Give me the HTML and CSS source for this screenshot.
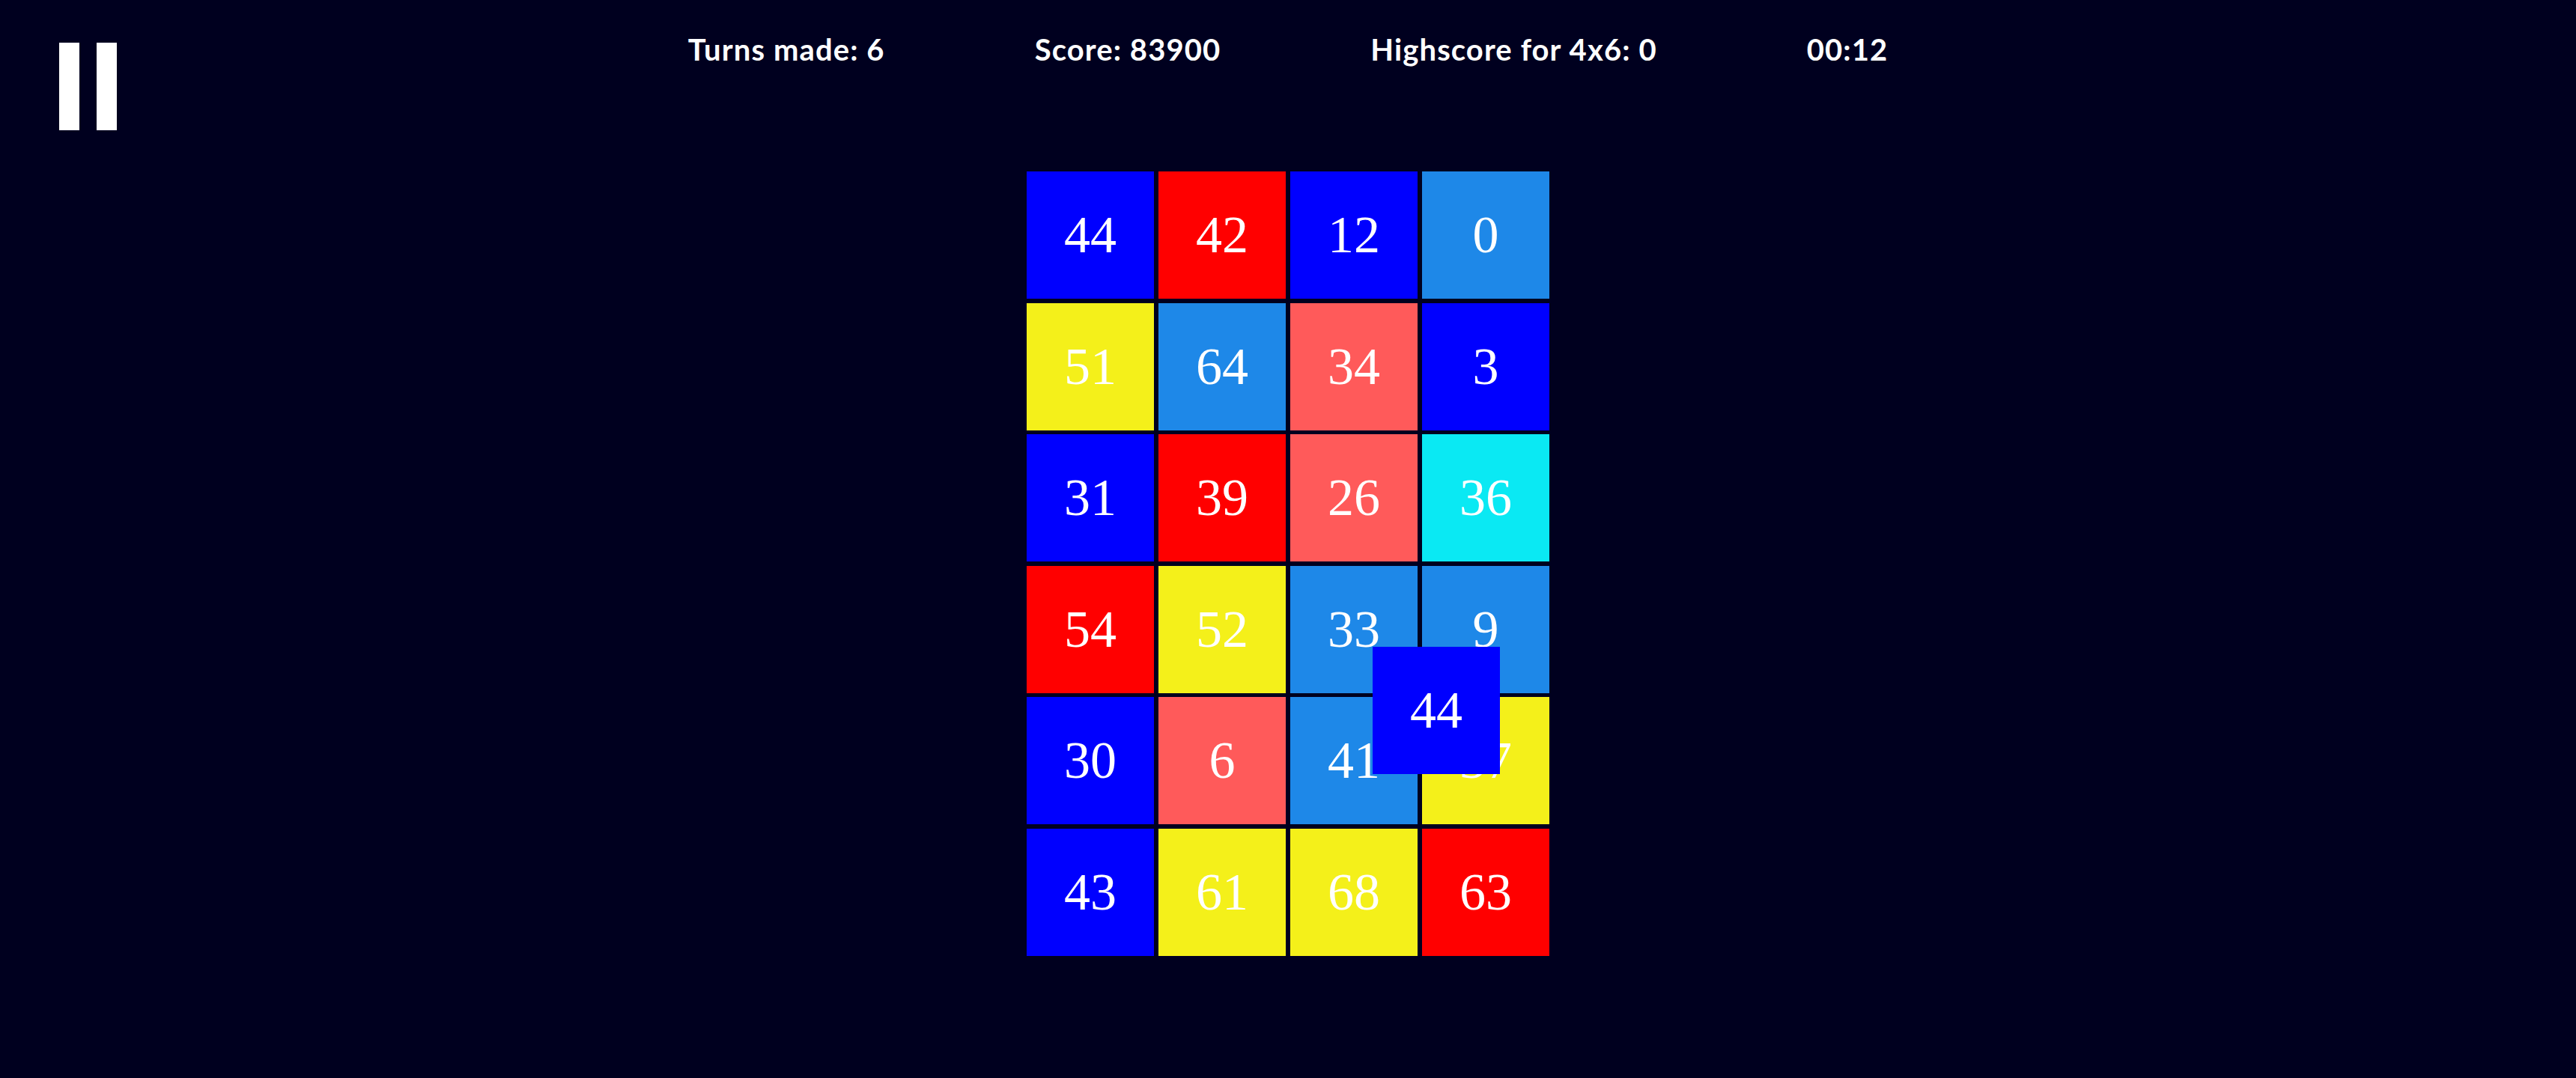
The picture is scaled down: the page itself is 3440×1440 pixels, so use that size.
FILE: index.html
```html
<!DOCTYPE html>
<html lang="en">
<head>
<meta charset="utf-8">
<title>Puzzle</title>
<link rel="stylesheet" href="styles.css">
</head>
<body>
<div class="page">
  <header class="topbar">
    <div class="left">
      <button class="pause" aria-label="Pause">
        <span class="bar"></span><span class="bar"></span>
      </button>
    </div>
    <div class="stats">
      <span class="stat">Turns made: 6</span>
      <span class="stat">Score: 83900</span>
      <span class="stat">Highscore for 4x6: 0</span>
      <span class="stat">00:12</span>
    </div>
    <div class="right"></div>
  </header>
  <main class="board-wrap">
    <div class="board">
      <div class="tile c-blue">44</div>
      <div class="tile c-red">42</div>
      <div class="tile c-blue">12</div>
      <div class="tile c-sky">0</div>

      <div class="tile c-yellow">51</div>
      <div class="tile c-sky">64</div>
      <div class="tile c-salmon">34</div>
      <div class="tile c-blue">3</div>

      <div class="tile c-blue">31</div>
      <div class="tile c-red">39</div>
      <div class="tile c-salmon">26</div>
      <div class="tile c-cyan">36</div>

      <div class="tile c-red">54</div>
      <div class="tile c-yellow">52</div>
      <div class="tile c-sky">33</div>
      <div class="tile c-sky">9</div>

      <div class="tile c-blue">30</div>
      <div class="tile c-salmon">6</div>
      <div class="tile c-sky">41</div>
      <div class="tile c-yellow">37</div>

      <div class="tile c-blue">43</div>
      <div class="tile c-yellow">61</div>
      <div class="tile c-yellow">68</div>
      <div class="tile c-red">63</div>

      <div class="tile c-blue dragging">44</div>
    </div>
  </main>
</div>
</body>
</html>
```
FILE: styles.css
```css
html, body {
  margin: 0;
  padding: 0;
  background: #00001f;
}

.page {
  width: 3440px;
  height: 1440px;
  display: flex;
  flex-direction: column;
  overflow: hidden;
}

.topbar {
  display: grid;
  grid-template-columns: 1fr auto 1fr;
  align-items: start;
  height: 174px;
}

.left {
  padding-left: 79px;
  padding-top: 57px;
}

.pause {
  display: flex;
  gap: 23px;
  padding: 0;
  margin: 0;
  border: 0;
  background: transparent;
  cursor: pointer;
}

.pause .bar {
  display: block;
  width: 27px;
  height: 117px;
  background: #ffffff;
}

.stats {
  display: flex;
  gap: 200px;
  padding-top: 42px;
  font-family: Lato, "Liberation Sans", sans-serif;
  font-weight: 700;
  font-size: 40px;
  letter-spacing: 1.1px;
  line-height: 48px;
  color: #ffffff;
  white-space: nowrap;
}

.board-wrap {
  display: flex;
  justify-content: center;
  padding-top: 55px;
}

.board {
  position: relative;
  display: grid;
  grid-template-columns: repeat(4, 170px);
  grid-auto-rows: 170px;
  column-gap: 6px;
  row-gap: 5.5px;
}

.tile {
  display: flex;
  align-items: center;
  justify-content: center;
  font-family: "Liberation Serif", "DejaVu Serif", serif;
  font-variant-numeric: slashed-zero;
  font-size: 70px;
  color: #ffffff;
}

.c-blue { background: #0000ff; }
.c-red { background: #ff0000; }
.c-sky { background: #1e88e8; }
.c-salmon { background: #ff5a5a; }
.c-yellow { background: #f4f01a; }
.c-cyan { background: #0ae9f3; }

.tile.dragging {
  position: absolute;
  left: 462px;
  top: 635px;
  width: 170px;
  height: 170px;
}
```
